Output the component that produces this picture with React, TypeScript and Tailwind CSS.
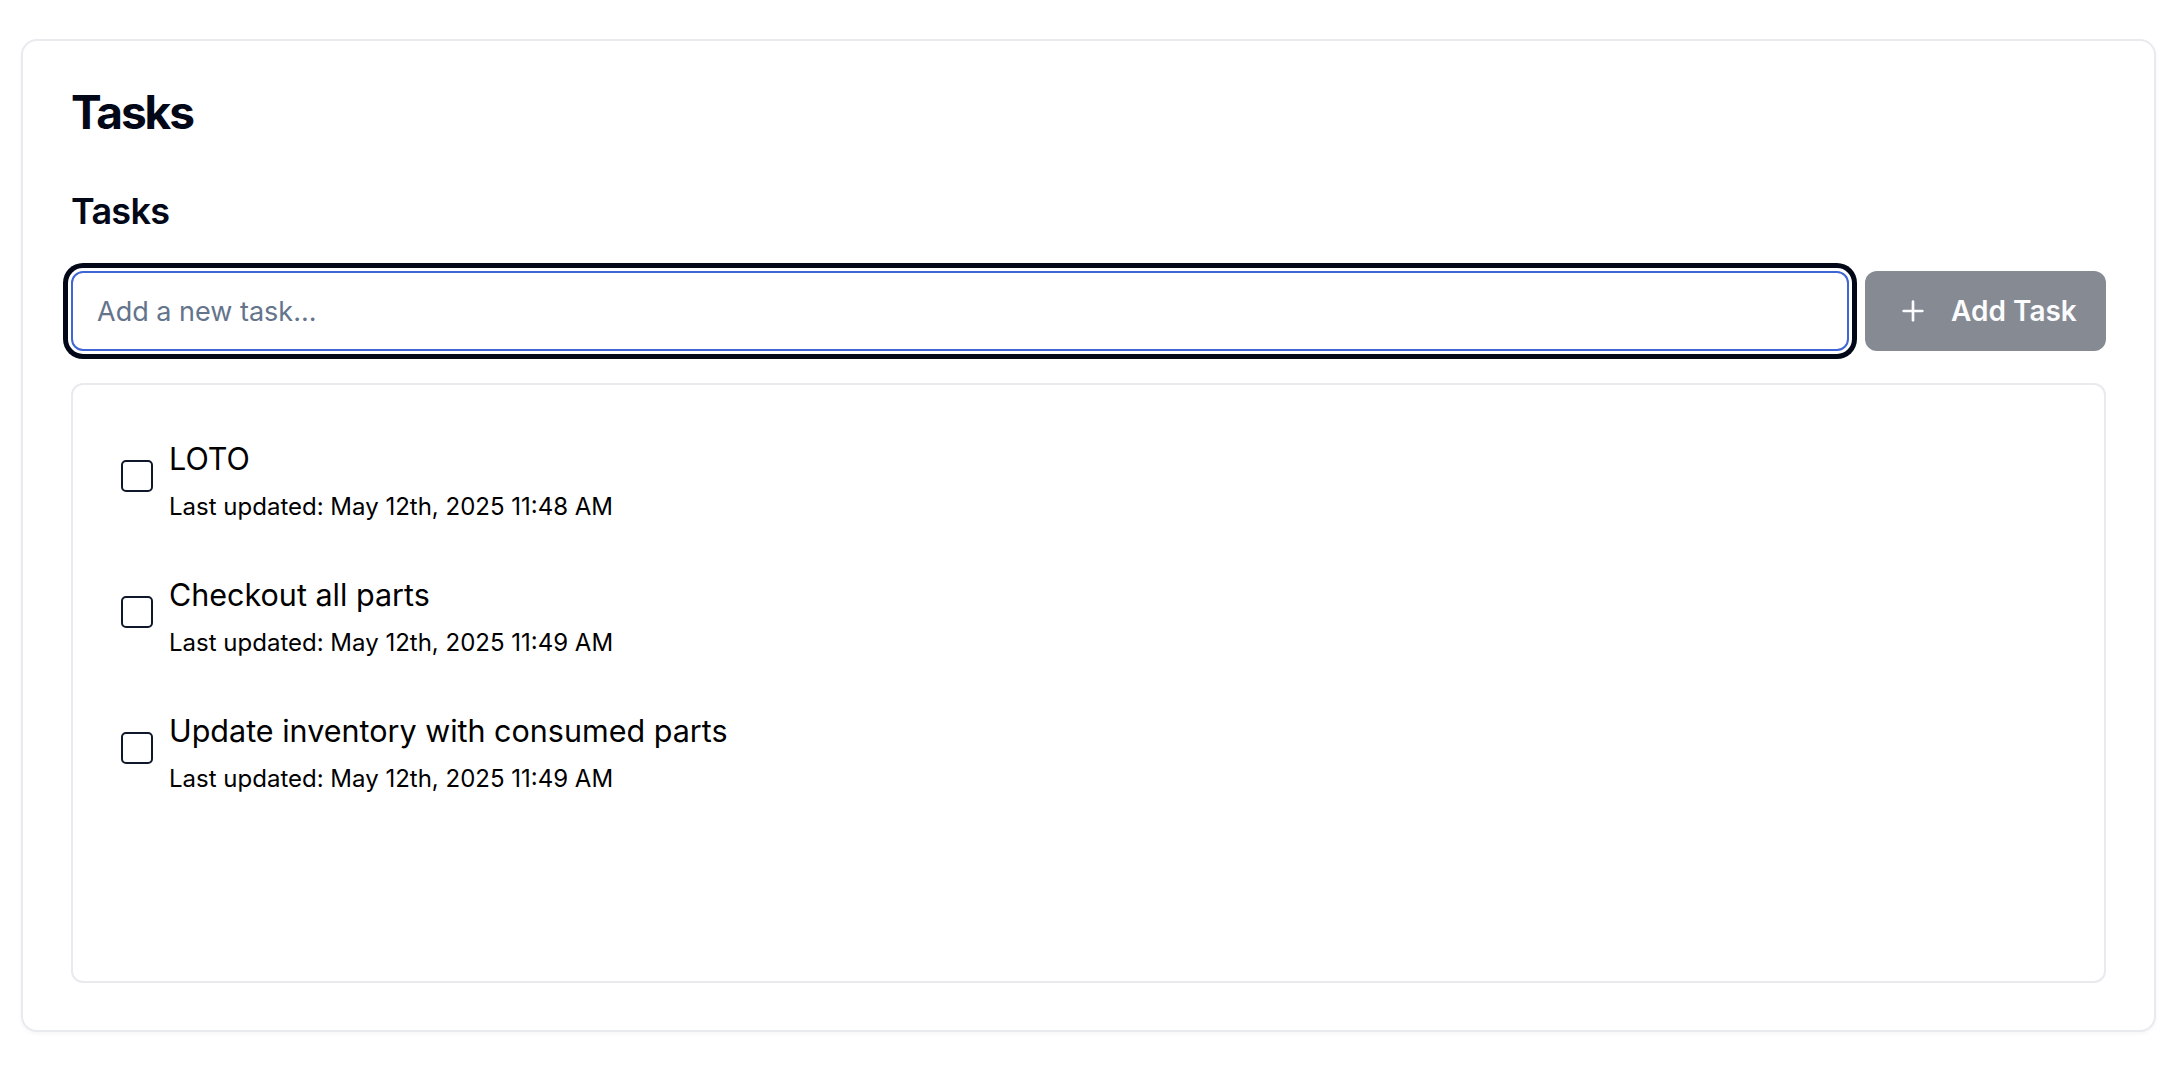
import React, { useState } from 'react';
import { Plus } from 'lucide-react';

const initialTasks = [
  { id: 1, title: 'LOTO', updated: 'May 12th, 2025 11:48 AM' },
  { id: 2, title: 'Checkout all parts', updated: 'May 12th, 2025 11:49 AM' },
  { id: 3, title: 'Update inventory with consumed parts', updated: 'May 12th, 2025 11:49 AM' },
];

const App = () => {
  const [tasks] = useState(initialTasks);
  const [newTask, setNewTask] = useState('');

  return (
    <div
      className="min-h-screen bg-white pl-[21px] pr-[26px] pt-[39px] text-[#020817]"
      style={{ fontFamily: 'Inter, "Noto Sans", sans-serif' }}
    >
      {/* Card */}
      <div className="rounded-[16px] border-2 border-[#e8eaee] bg-white shadow-[0_2px_4px_rgba(0,0,0,0.04)]">
        <div className="p-[48px]">
          <h1 className="text-[46px] font-bold leading-none tracking-[-0.045em]">Tasks</h1>
        </div>

        <div className="px-[48px] pb-[47px]">
          <h2 className="mb-[32px] text-[36px] font-semibold leading-[56px] tracking-[-0.02em]">Tasks</h2>

          {/* New task form */}
          <div className="flex items-center gap-[16px]">
            <input
              value={newTask}
              onChange={(e) => setNewTask(e.target.value)}
              placeholder="Add a new task..."
              className="h-[80px] min-w-0 flex-1 rounded-[12px] border-[2.5px] border-[#3f66d4] bg-white px-[24px] text-[27px] text-[#020817] outline-none shadow-[0_0_0_3px_#fff,0_0_0_8px_#020817] placeholder:text-[#64748b]"
            />
            <button
              disabled={!newTask.trim()}
              className="flex h-[80px] w-[241px] shrink-0 items-center gap-[22px] whitespace-nowrap rounded-[12px] bg-[#0f172a] pl-[32px] text-[28px] font-semibold text-[#f8fafc] disabled:opacity-50"
            >
              <Plus size={32} strokeWidth={2} className="shrink-0" />
              <span>Add Task</span>
            </button>
          </div>

          {/* Task list */}
          <div className="mt-[32px] h-[600px] rounded-[12px] border-2 border-[#e8eaee] px-[48px] pt-[50px]">
            <div className="flex flex-col gap-[48px]">
              {tasks.map((task) => (
                <div key={task.id} className="flex items-start gap-[16px]">
                  <button
                    role="checkbox"
                    aria-checked="false"
                    className="mt-[25px] h-[32px] w-[32px] shrink-0 rounded-[5px] border-[2.5px] border-[#0f172a] bg-white"
                  />
                  <div className="flex flex-col">
                    <span className="text-[30.5px] leading-[48px] text-black">{task.title}</span>
                    <span className="mt-[8px] text-[24px] leading-[32px] text-black">
                      Last updated: {task.updated}
                    </span>
                  </div>
                </div>
              ))}
            </div>
          </div>
        </div>
      </div>
    </div>
  );
};

export default App;
